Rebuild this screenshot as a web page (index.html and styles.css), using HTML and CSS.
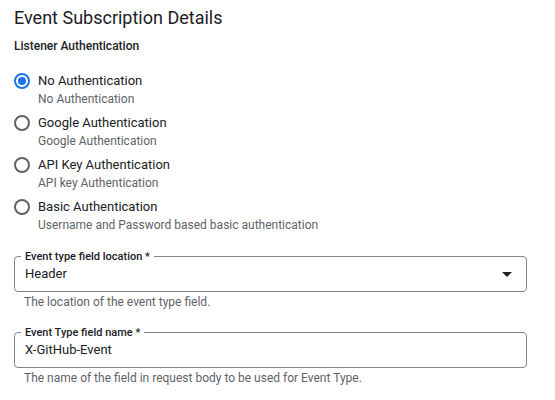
FILE: index.html
```html
<!DOCTYPE html>
<html>
<head>
<meta charset="utf-8">
<link rel="stylesheet" href="styles.css">
</head>
<body>
<div class="page">
  <h1 class="title">Event Subscription Details</h1>
  <div class="section-label">Listener Authentication</div>
  <div class="radios">
    <div class="radio-item">
      <span class="radio checked"></span>
      <div class="radio-text">
        <div class="radio-label">No Authentication</div>
        <div class="radio-sub">No Authentication</div>
      </div>
    </div>
    <div class="radio-item">
      <span class="radio"></span>
      <div class="radio-text">
        <div class="radio-label">Google Authentication</div>
        <div class="radio-sub">Google Authentication</div>
      </div>
    </div>
    <div class="radio-item">
      <span class="radio"></span>
      <div class="radio-text">
        <div class="radio-label">API Key Authentication</div>
        <div class="radio-sub">API key Authentication</div>
      </div>
    </div>
    <div class="radio-item">
      <span class="radio"></span>
      <div class="radio-text">
        <div class="radio-label">Basic Authentication</div>
        <div class="radio-sub">Username and Password based basic authentication</div>
      </div>
    </div>
  </div>

  <div class="field field-select">
    <div class="box">
      <span class="float-label">Event type field location *</span>
      <span class="value">Header</span>
      <svg class="arrow" width="10" height="5" viewBox="0 0 10 5"><path d="M0 0 L10 0 L5 5 Z" fill="#202124"/></svg>
    </div>
    <div class="hint">The location of the event type field.</div>
  </div>

  <div class="field field-input">
    <div class="box">
      <span class="float-label">Event Type field name *</span>
      <span class="value">X-GitHub-Event</span>
    </div>
    <div class="hint">The name of the field in request body to be used for Event Type.</div>
  </div>
</div>
</body>
</html>
```
FILE: styles.css
```css
* { box-sizing: border-box; }
html, body { margin: 0; padding: 0; background: #fff; }
body {
  font-family: Roboto, "Liberation Sans", Arial, sans-serif;
  color: #202124;
}
.page {
  padding: 7px 28px 0 14px;
}
.title {
  margin: 0;
  font-size: 18px;
  font-weight: 400;
  line-height: 22px;
  color: #202124;
}
.section-label {
  margin-top: 10px;
  font-size: 12px;
  font-weight: 500;
  line-height: 14px;
}
.radios {
  margin-top: 19px;
  display: flex;
  flex-direction: column;
  gap: 6px;
}
.radio-item {
  display: flex;
  align-items: flex-start;
  gap: 8px;
}
.radio {
  flex: none;
  width: 16px;
  height: 16px;
  border: 2px solid #5f6368;
  border-radius: 50%;
  margin-top: 1px;
  display: flex;
  align-items: center;
  justify-content: center;
}
.radio.checked {
  border-color: #1a73e8;
}
.radio.checked::after {
  content: "";
  width: 8px;
  height: 8px;
  border-radius: 50%;
  background: #1a73e8;
}
.radio-label {
  font-size: 13px;
  line-height: 18px;
  color: #202124;
}
.radio-sub {
  font-size: 12px;
  line-height: 18px;
  color: #5f6368;
}
.field-select { margin-top: 22px; }
.field-input { margin-top: 23px; }
.box {
  position: relative;
  height: 36px;
  border: 1px solid #80868b;
  border-radius: 4px;
  display: flex;
  align-items: flex-start;
  padding: 9px 14px 0 10px;
}
.float-label {
  position: absolute;
  top: -7px;
  left: 6px;
  padding: 0 4px;
  background: #fff;
  font-size: 11px;
  font-weight: 500;
  line-height: 13px;
  color: #202124;
}
.value {
  flex: 1;
  font-size: 13px;
  line-height: 16px;
  color: #202124;
}
.arrow {
  margin-top: 6px;
}
.hint {
  margin-top: 3px;
  padding-left: 10px;
  font-size: 12px;
  line-height: 14px;
  color: #5f6368;
}
```
